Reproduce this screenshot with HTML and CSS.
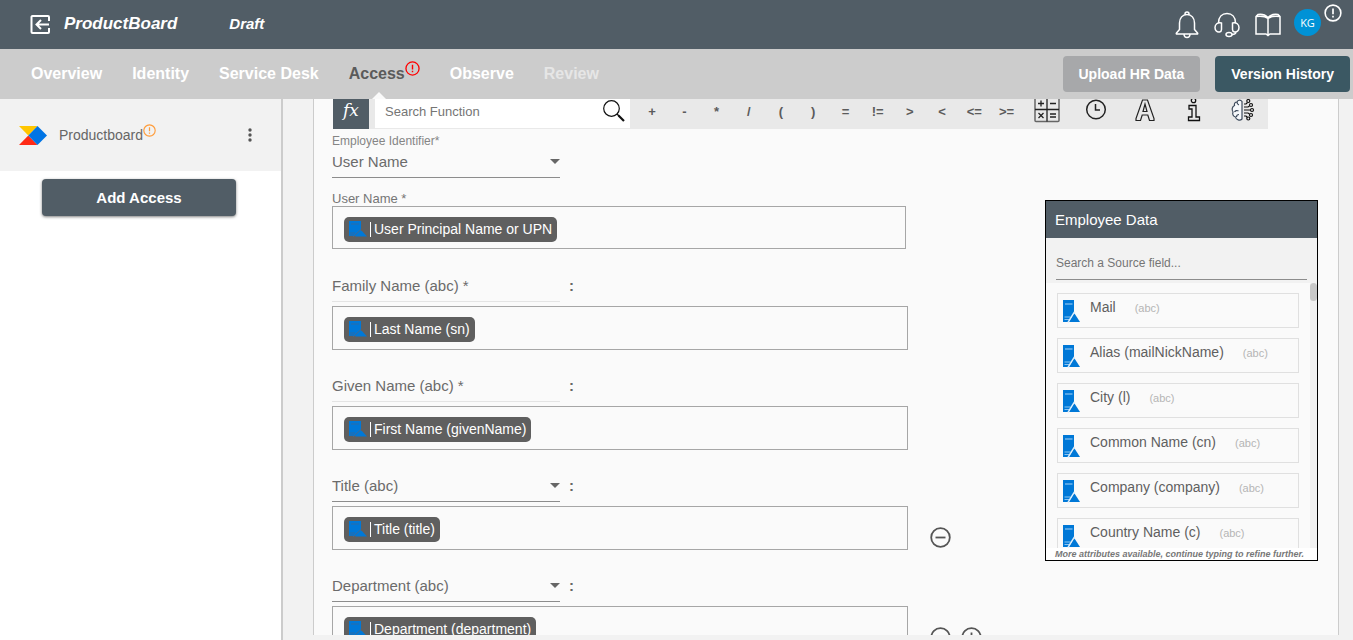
FILE: index.html
```html
<!DOCTYPE html>
<html lang="en">
<head>
<meta charset="utf-8">
<title>ProductBoard - Access</title>
<link rel="stylesheet" href="styles.css">
</head>
<body>
<svg class="defs" aria-hidden="true">
  <symbol id="server" viewBox="0 0 18 23">
    <path d="M1 0h11v22H1z" fill="#0078d7"/>
    <path d="M3 4h7.500" stroke="#a9d3f5" stroke-width="1"/>
    <path d="M2.500 17h6M2.500 19.500h5" stroke="#8cc5f2" stroke-width="1.200"/>
    <path d="M12.500 12L6 22.500" stroke="#dceefb" stroke-width="1.500"/>
    <path d="M12.500 13.500L18 22H7.500z" fill="#0078d7"/>
  </symbol>
  <symbol id="chip-server" viewBox="0 0 18 16">
    <path d="M0 0h12v15H0z" fill="#0078d7"/>
    <path d="M2 3h8M1 12h5M1 14h4" stroke="#2c6ba5"/>
    <path d="M12 8.500L4 16" stroke="#48698a"/>
    <path d="M12.500 9.500L18 15.500H6z" fill="#0078d7"/>
  </symbol>
  <symbol id="alert" viewBox="0 0 16 16">
    <circle cx="8" cy="8" r="7" fill="none" stroke="currentColor" stroke-width="1.400"/>
    <path d="M8 4v5M8 10.500v1.500" stroke="currentColor" stroke-width="1.500"/>
  </symbol>
</svg>

<header class="topbar">
  <button class="icon-btn back" aria-label="Exit">
    <svg width="20" height="20" viewBox="0 0 20 20" fill="none" stroke="#fff" stroke-width="2"><path d="M19 6V2a1 1 0 0 0-1-1H2.500a1 1 0 0 0-1 1v15a1 1 0 0 0 1 1H18a1 1 0 0 0 1-1V13M19 9.500H7M11 5L6.500 9.500l4.500 4.500"/></svg>
  </button>
  <h1 class="app-name">ProductBoard</h1>
  <span class="status">Draft</span>
  <div class="top-icons">
    <button class="icon-btn" aria-label="Notifications">
      <svg width="24" height="28" viewBox="0 0 24 28" fill="none" stroke="#fff" stroke-width="1.500"><path d="M10 4V3a2 2 0 0 1 4 0v1M4.500 18.500V12c0-5 3-8.500 7.500-8.500s7.500 3.500 7.500 8.500v6.500l3 3.500c.5.700.200 1-.5 1H2c-.700 0-1-.3-.5-1zM9 23.500c.3 4 5.700 4 6 0"/></svg>
    </button>
    <button class="icon-btn" aria-label="Support">
      <svg width="26" height="26" viewBox="0 0 26 26" fill="none" stroke="#fff" stroke-width="1.500"><path d="M4.500 11C4.500 5 8 1.500 13 1.500S21.500 5 21.500 11M7.500 11c-4-1-6.500 1.500-6.500 4.500s2 5 4.500 4.500c1.500-.3 2-1 2-2.500zM18.500 11c4-1 6.500 1.500 6.500 4.500s-2 5-4.500 4.500c-1.500-.3-2-1-2-2.500zM22 19.500c0 2-1.500 3-4 3"/><ellipse cx="15" cy="22.500" rx="3" ry="2"/></svg>
    </button>
    <button class="icon-btn" aria-label="Documentation">
      <svg width="26" height="24" viewBox="0 0 26 24" fill="none" stroke="#fff" stroke-width="1.500"><path d="M13 4.500C10 1.500 6 1 3 1.500L1 3.500v17.500h10l2 1.500 2-1.500h10V3.500L23 1.500c-3-.5-7 0-10 3zM13 4.500v18M1 3.500c4-.5 9-.5 12 2 3-2.500 8-2.500 12-2"/></svg>
    </button>
    <button class="avatar">KG</button>
    <svg class="top-alert" width="18" height="18"><use href="#alert"/></svg>
  </div>
</header>

<nav class="tabs">
  <a class="tab" href="#overview">Overview</a>
  <a class="tab" href="#identity">Identity</a>
  <a class="tab" href="#desk">Service Desk</a>
  <a class="tab active" href="#access"><span>Access</span><svg class="tab-alert" width="15" height="15"><use href="#alert"/></svg></a>
  <a class="tab" href="#observe">Observe</a>
  <a class="tab dim" href="#review">Review</a>
  <div class="tab-actions">
    <button class="btn grey">Upload HR Data</button>
    <button class="btn teal">Version History</button>
  </div>
</nav>

<div class="body">
  <aside class="sidebar">
    <div class="side-item">
      <svg width="28" height="19" viewBox="0 0 28 19"><path d="M0 0h18.500L9.300 9.500z" fill="#ffc600"/><path d="M0 19h18.500L9.300 9.500z" fill="#ff2a16"/><path d="M18.500 0L28 9.500 18.500 19 9.300 9.500z" fill="#0074e4"/></svg>
      <span class="side-name">Productboard</span>
      <svg class="side-alert" width="13" height="13"><use href="#alert"/></svg>
      <button class="icon-btn more" aria-label="More"><svg width="4" height="14" viewBox="0 0 4 14" fill="#555"><circle cx="2" cy="2" r="1.700"/><circle cx="2" cy="7" r="1.700"/><circle cx="2" cy="12" r="1.700"/></svg></button>
    </div>
    <button class="add">Add Access</button>
  </aside>

  <main class="main">
    <section class="panel">
      <div class="toolbar">
        <button class="fx">fx</button>
        <div class="search">
          <input type="text" placeholder="Search Function" aria-label="Search Function">
          <svg width="22" height="22" viewBox="0 0 22 22" fill="none" stroke="#111"><circle cx="8.500" cy="8.500" r="7.800" stroke-width="1.200"/><path d="M14 14l2 2" stroke-width="1.500"/><path d="M15.500 15.500l5.500 5.500" stroke-width="2.200"/></svg>
        </div>
        <div class="ops">
          <button>+</button><button>-</button><button>*</button><button>/</button><button>(</button><button>)</button><button>=</button><button>!=</button><button>&gt;</button><button>&lt;</button><button>&lt;=</button><button>&gt;=</button>
        </div>
        <div class="tools">
          <button aria-label="Math"><svg width="26" height="24" viewBox="0 0 26 24" fill="none"><path d="M1 0v21.500q0 1 1 1h22q1 0 1-1V0" stroke="#666" stroke-width="1.500"/><path d="M13 0v22.500M1 10.500h24" stroke="#222" stroke-width="1.300"/><path d="M4 4.500h6M7 1.500v6M16 4.500h6M4.500 14l5 5M9.500 14l-5 5M16 15h6M16 18h6" stroke="#222" stroke-width="1.300"/></svg></button>
          <button aria-label="Date"><svg width="22" height="22" viewBox="0 0 22 22" fill="none" stroke="#222" stroke-width="1.500"><circle cx="11" cy="10.500" r="9.300"/><path d="M10.500 5v6H15"/></svg></button>
          <button aria-label="Text"><svg width="22" height="24" viewBox="0 0 22 24" fill="none" stroke="#222" stroke-width="1.200"><path d="M8.500 1h5l6.500 18.500v2h-4.500L13.800 16H8.200l-1.700 5.500H2v-2zM9 12.500h4L11 5z"/></svg></button>
          <button aria-label="Info"><svg width="14" height="24" viewBox="0 0 14 24" fill="none" stroke="#111" stroke-width="1.300"><circle cx="6.500" cy="1.500" r="2.200"/><path d="M2 6.500h7v11.500h3.500v3.500H1.500v-3.500H5v-8H2z"/></svg></button>
          <button aria-label="AI"><svg width="24" height="24" viewBox="0 0 24 24" fill="none"><path d="M11 2.500C9.500.5 6.500 1 6 3 4 3 3 4.500 3.500 6.500 1 7.500.5 11 2 13c-1 2.500.5 4.500 2.500 5 .5 3 4.500 4 6.500 2zM6 3c0 1.500.5 2.500 2 3M3.500 13c1-1.500 2.500-2 4-1M8 15.500c-1.500 0-2.500 1-2.500 2.500" fill="#f7f9fc" stroke="#3d4a5c" stroke-width="1.200"/><path d="M13 5h2l1.500-1.500M13 8h4l1.500-1M13 11h6M13 14h4l1.500 1M13 17h2l1.500 1.500" stroke="#111" stroke-width="1.200"/><g fill="#e9e9e9" stroke="#111" stroke-width="1.200"><circle cx="17.300" cy="2" r="1.500"/><circle cx="20" cy="6" r="1.500"/><circle cx="21" cy="11" r="1.500"/><circle cx="20" cy="16" r="1.500"/><circle cx="17.300" cy="19.500" r="1.500"/></g></svg></button>
        </div>
      </div>

      <div class="columns">
        <form class="form">
          <label class="small-label" for="ident">Employee Identifier*</label>
          <div class="select ident"><select id="ident"><option>User Name</option></select></div>
          <div class="name-label" id="l-user">User Name *</div>
          <div class="box first" role="group" aria-labelledby="l-user"><span class="chip"><svg width="18" height="16"><use href="#chip-server"/></svg><span>User Principal Name or UPN</span></span></div>

          <div class="row">
            <div class="row-head"><div class="select fixed" id="l-family">Family Name (abc) *</div><b>:</b></div>
            <div class="row-body"><div class="box" role="group" aria-labelledby="l-family"><span class="chip"><svg width="18" height="16"><use href="#chip-server"/></svg><span>Last Name (sn)</span></span></div></div>
          </div>
          <div class="row">
            <div class="row-head"><div class="select fixed" id="l-given">Given Name (abc) *</div><b>:</b></div>
            <div class="row-body"><div class="box" role="group" aria-labelledby="l-given"><span class="chip"><svg width="18" height="16"><use href="#chip-server"/></svg><span>First Name (givenName)</span></span></div></div>
          </div>
          <div class="row">
            <div class="row-head"><div class="select"><select aria-label="Attribute 3"><option>Title (abc)</option></select></div><b>:</b></div>
            <div class="row-body"><div class="box" role="group" aria-label="Title"><span class="chip"><svg width="18" height="16"><use href="#chip-server"/></svg><span>Title (title)</span></span></div>
              <button type="button" class="icon-btn" aria-label="Remove"><svg width="21" height="21" viewBox="0 0 21 21" fill="none" stroke="#555" stroke-width="1.800"><circle cx="10.500" cy="10.500" r="9.300"/><path d="M5.500 10.500h10"/></svg></button></div>
          </div>
          <div class="row">
            <div class="row-head"><div class="select"><select aria-label="Attribute 4"><option>Department (abc)</option></select></div><b>:</b></div>
            <div class="row-body"><div class="box" role="group" aria-label="Department"><span class="chip"><svg width="18" height="16"><use href="#chip-server"/></svg><span>Department (department)</span></span></div>
              <button type="button" class="icon-btn" aria-label="Remove"><svg width="21" height="21" viewBox="0 0 21 21" fill="none" stroke="#555" stroke-width="1.800"><circle cx="10.500" cy="10.500" r="9.300"/><path d="M5.500 10.500h10"/></svg></button>
              <button type="button" class="icon-btn plus" aria-label="Add"><svg width="21" height="21" viewBox="0 0 21 21" fill="none" stroke="#555" stroke-width="1.800"><circle cx="10.500" cy="10.500" r="9.300"/><path d="M5.500 10.500h10M10.500 5.500v10"/></svg></button></div>
          </div>
        </form>

        <aside class="data">
          <h2>Employee Data</h2>
          <div class="data-search"><input type="text" placeholder="Search a Source field..." aria-label="Search a Source field"></div>
          <div class="data-body">
            <ul>
              <li><svg width="18" height="23"><use href="#server"/></svg><span>Mail</span><small>(abc)</small></li>
              <li><svg width="18" height="23"><use href="#server"/></svg><span>Alias (mailNickName)</span><small>(abc)</small></li>
              <li><svg width="18" height="23"><use href="#server"/></svg><span>City (l)</span><small>(abc)</small></li>
              <li><svg width="18" height="23"><use href="#server"/></svg><span>Common Name (cn)</span><small>(abc)</small></li>
              <li><svg width="18" height="23"><use href="#server"/></svg><span>Company (company)</span><small>(abc)</small></li>
              <li><svg width="18" height="23"><use href="#server"/></svg><span>Country Name (c)</span><small>(abc)</small></li>
            </ul>
            <div class="track"><div class="thumb"></div></div>
          </div>
          <p class="note">More attributes available, continue typing to refine further.</p>
        </aside>
      </div>
    </section>
  </main>
</div>
</body>
</html>
```

FILE: styles.css
```css
* { box-sizing: border-box; }
body {
  margin: 0;
  height: 100vh;
  display: flex;
  flex-direction: column;
  overflow: hidden;
  background: #f2f2f2;
  color: #666;
  font-family: "Liberation Sans", Arial, sans-serif;
}
button, input, select { font-family: inherit; margin: 0; border: 0; padding: 0; background: none; color: inherit; }
svg { display: block; flex: none; }
.defs { position: absolute; width: 0; height: 0; }
.icon-btn { display: flex; flex: none; }

.topbar {
  flex: none;
  display: flex;
  align-items: center;
  height: 49px;
  padding: 0 11px 0 30px;
  background: #515d66;
  color: #fff;
  font-style: italic;
  font-weight: bold;
}
.app-name { margin: 0 52px 0 14px; font-size: 17px; line-height: 20px; padding-bottom: 2px; }
.status { font-size: 15px; line-height: 20px; padding-bottom: 2px; }
.top-icons { display: flex; align-items: center; align-self: stretch; gap: 15px; margin-left: auto; }
.avatar {
  width: 27px;
  height: 27px;
  margin: 0 -12px 4px -2px;
  border-radius: 50%;
  background: #0092d6;
  color: #fff;
  font: 11px/27px "Open Sans", sans-serif;
}
.top-alert { align-self: flex-start; margin-top: 4px; }

.tabs {
  flex: none;
  display: flex;
  align-items: center;
  gap: 30px;
  height: 50px;
  padding: 0 3px 0 31px;
  background: #ccc;
}
.tab { position: relative; display: flex; color: #fff; font-size: 16px; font-weight: bold; line-height: 50px; text-decoration: none; }
.tab.active { color: #5b5b5b; }
.tab.active::after {
  content: "";
  position: absolute;
  bottom: 0;
  left: 23px;
  border: solid transparent;
  border-width: 0 7px 7px;
  border-bottom-color: #fafafa;
}
.tab.dim { color: #e6e6e6; }
.tab-alert { margin-top: 12px; color: #f00; }
.tab-actions { display: flex; gap: 15px; margin-left: auto; }
.btn { height: 36px; padding: 0 16px; border-radius: 4px; color: #fff; font-size: 14px; font-weight: bold; }
.grey { background: #a7a8aa; }
.teal { background: #3b5863; }

.body { flex: 1; min-height: 0; display: flex; }
.sidebar { flex: none; width: 283px; border-right: 2px solid #ccc; background: #fff; }
.side-item { display: flex; align-items: center; height: 72px; padding: 0 29px 0 19px; background: #f2f2f2; }
.side-name { margin-left: 12px; font-size: 14px; }
.side-alert { margin: 0 0 10px; color: #ff9c3a; }
.more { margin-left: auto; }
.add {
  display: block;
  width: 194px;
  height: 37px;
  margin: 8px auto 0 42px;
  border-radius: 4px;
  background: #515d66;
  box-shadow: 0 1px 3px rgba(0, 0, 0, .5);
  color: #fff;
  font-size: 15px;
  font-weight: bold;
}

.main { flex: 1; min-width: 0; padding: 0 14px 5px 30px; }
.panel { height: 100%; overflow: hidden; background: #fafafa; border: solid #ccc; border-width: 0 1px; }
.toolbar { display: flex; height: 30px; margin: 0 70px 0 19px; background: #e9e9e9; overflow: hidden; }
.fx { width: 36px; margin-right: 6px; padding-bottom: 8px; background: #515d66; color: #fff; font: italic 20px "DejaVu Serif", serif; font-size: 17px; }
.search { display: flex; width: 255px; height: 29px; padding: 0 5px 0 10px; background: #fff; }
.search input { flex: 1; min-width: 0; height: 25px; font-size: 13px; outline: 0; }
.search svg { margin-top: 1px; }
input::placeholder { color: #757575; opacity: 1; }
.ops { flex: 386; display: flex; margin-left: 6px; }
.ops button { flex: 1; padding-bottom: 6px; color: #5b5b5b; font-size: 13px; font-weight: bold; }
.tools { flex: 245; display: flex; }
.tools button { flex: 1; display: flex; justify-content: center; align-items: flex-start; }

.columns { display: flex; justify-content: space-between; align-items: flex-start; padding: 0 20px 0 18px; }
.form { width: 650px; padding-top: 5px; }
.small-label { display: block; font-size: 12px; line-height: 14px; color: #858585; }
.select { position: relative; width: 228px; height: 31px; border-bottom: 1px solid #8c8c8c; font-size: 15px; line-height: 30px; color: #6b6b6b; }
.select select { display: block; width: 100%; height: 28px; appearance: none; font-size: 15px; outline: 0; }
.select::after {
  content: "";
  position: absolute;
  top: 12px;
  right: 0;
  border: solid transparent;
  border-width: 5px 5px 0;
  border-top-color: #666;
  pointer-events: none;
}
.ident { height: 30px; }
.ident::after { top: 11px; }
.ident select { height: 27px; }
.fixed { border-color: #e4e4e4; }
.fixed::after { display: none; }
.name-label { margin-top: 13px; font-size: 13px; line-height: 15px; color: #757575; }
.box { display: flex; align-items: center; width: 576px; height: 44px; padding: 2px 11px 0; border: 1px solid #a6a6a6; }
.first { width: 574px; height: 43px; padding-top: 3px; margin-bottom: 22px; }
.chip { display: flex; align-items: center; gap: 3px; height: 25px; padding: 0 5px; border-radius: 5px; background: #5f5f5f; color: #fff; font-size: 14px; }
.chip span { padding-left: 3px; border-left: 1px solid #fff; line-height: 15px; }
.row { margin-bottom: 21px; }
.row-head { display: flex; gap: 9px; line-height: 30px; font-size: 15px; }
.row-body { display: flex; align-items: flex-end; gap: 22px; margin-top: 4px; }
.row-body .icon-btn { margin-bottom: 2px; }
.row-body .plus { margin-left: -12px; }

.data { width: 273px; margin-top: 71px; border: 1px solid #000; background: #fafafa; }
.data h2 { margin: 0; padding-left: 9px; background: #515d66; color: #fff; font-size: 15px; font-weight: normal; line-height: 37px; }
.data-search { height: 45px; padding: 8px 10px 0; background: #f2f2f2; }
.data-search input { display: block; width: 100%; height: 34px; border-bottom: 1px solid #8c8c8c; font-size: 12px; outline: 0; }
.data-body { display: flex; height: 265px; overflow: hidden; }
.data ul { flex: 1; margin: 0; padding: 10px 11px 0; list-style: none; }
.data li { display: flex; height: 35px; margin-bottom: 10px; padding: 6px 0 0 4px; border: 1px solid #e0e0e0; font-size: 14px; line-height: 14px; color: #5f5f5f; }
.data li span { margin: 0 19px 0 10px; }
.data small { color: #b5b5b5; font-size: 11px; line-height: 16px; }
.track { width: 7px; background: #f1f1f1; }
.thumb { height: 18px; border-radius: 4px; background: #c8c8c8; }
.note { margin: 0; padding-left: 9px; background: #fff; color: #777; font-size: 9px; font-style: italic; font-weight: bold; line-height: 12px; white-space: nowrap; }
```
